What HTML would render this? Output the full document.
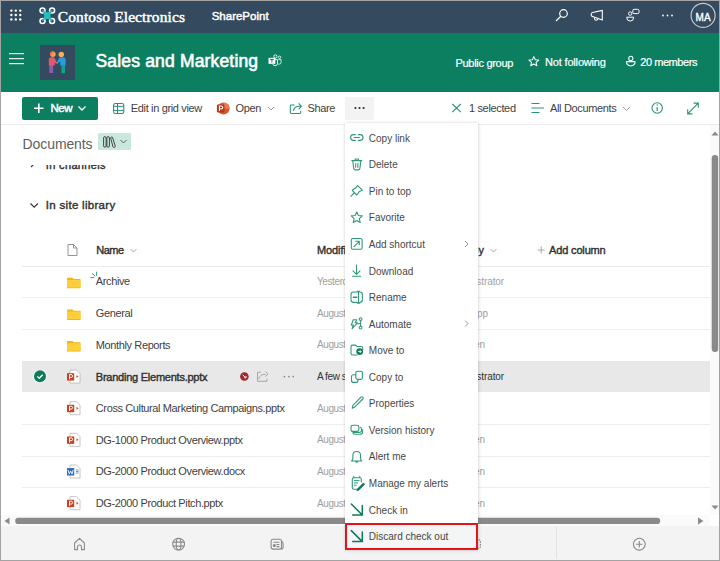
<!DOCTYPE html>
<html><head><meta charset="utf-8">
<style>
*{margin:0;padding:0;box-sizing:border-box}
html,body{width:720px;height:561px;overflow:hidden;background:#fff}
body{position:relative;font-family:"Liberation Sans",sans-serif;color:#323130}
.a{position:absolute}
.t{position:absolute;white-space:nowrap;line-height:1}
svg{position:absolute;overflow:visible}
#frame{position:absolute;left:0;top:0;width:720px;height:561px;border:1px solid #a3a3a3;z-index:50;pointer-events:none}
#suite{position:absolute;left:0;top:0;width:720px;height:33px;background:#344a5e}
#hdr{position:absolute;left:0;top:33px;width:720px;height:59px;background:#0c7f60}
#cmd{position:absolute;left:0;top:92px;width:720px;height:32px;background:#fff}
.sep{position:absolute;left:0;top:124px;width:719px;height:1px;background:#ececec}
.row{position:absolute;left:22px;width:688px;height:31.65px;border-bottom:1px solid #f0f0f0}
.cm{font-size:11px;letter-spacing:-0.35px;color:#424140}
.lt{font-size:11px;letter-spacing:-0.38px;color:#424140}
.gr{font-size:11px;letter-spacing:-0.3px;color:#a19f9d}
.wt{color:#fff}
#menu{position:absolute;left:345px;top:123px;width:133px;height:427px;background:#fff;box-shadow:0 0 2.5px rgba(0,0,0,0.16),1px 1px 4px rgba(0,0,0,0.07);z-index:20}
.mi{position:absolute;left:23.8px;font-size:10px;letter-spacing:0px;color:#484746;line-height:1;white-space:nowrap}
</style></head><body>

<!-- Suite bar -->
<div id="suite">
  <svg width="720" height="33" style="left:0;top:0">
    <g fill="#fff"><circle cx="11.35" cy="10.6" r="1.2"/><circle cx="15.8" cy="10.6" r="1.2"/><circle cx="20.25" cy="10.6" r="1.2"/><circle cx="11.35" cy="15.0" r="1.2"/><circle cx="15.8" cy="15.0" r="1.2"/><circle cx="20.25" cy="15.0" r="1.2"/><circle cx="11.35" cy="19.4" r="1.2"/><circle cx="15.8" cy="19.4" r="1.2"/><circle cx="20.25" cy="19.4" r="1.2"/></g>
    <!-- drone logo -->
    <g>
      <g fill="none" stroke="#fff" stroke-width="1.5">
      <circle cx="42.5" cy="10.4" r="2.5"/>
      <circle cx="52.1" cy="10.4" r="2.5"/>
      <circle cx="42.5" cy="20.9" r="2.5"/>
      <circle cx="52.1" cy="20.9" r="2.5"/>
      </g>
      <path d="M42.8 10.8 Q47.3 15.2 51.8 10.8 Q47.6 15.65 51.8 20.5 Q47.3 16.1 42.8 20.5 Q47 15.65 42.8 10.8 Z" fill="#25bdbd" stroke="#25bdbd" stroke-width="1.3" stroke-linejoin="round"/>
    </g>
    <!-- search -->
    <circle cx="563.5" cy="13.5" r="3.8" fill="none" stroke="#fff" stroke-width="1.2"/>
    <path d="M560.8 16.3 L556 21" stroke="#fff" stroke-width="1.3"/>
    <!-- megaphone -->
    <path d="M592.6 12.5 L602.3 10.4 V19.9 L592.6 16.6 Q591.1 16.2 591.1 14.55 Q591.1 12.9 592.6 12.5 Z M594.6 17.3 q-0.4 2.7 1.3 2.9 q1.7 0.1 2 -1.9" fill="none" stroke="#fff" stroke-width="1.1" stroke-linejoin="round"/>
    <!-- chat/settings -->
    <circle cx="630.2" cy="13.6" r="1.7" fill="none" stroke="#fff" stroke-width="1"/>
    <path d="M626.7 17.2 h7 q0 3.9 -3.5 3.9 q-3.5 0 -3.5 -3.9 z" fill="none" stroke="#fff" stroke-width="1" stroke-linejoin="round"/>
    <rect x="632.8" y="9.3" width="6.2" height="4.3" rx="1.3" fill="#344a5e" stroke="#fff" stroke-width="1"/>
    <!-- dots -->
    <circle cx="663" cy="15.5" r="0.9" fill="#fff"/><circle cx="667.5" cy="15.5" r="0.9" fill="#fff"/><circle cx="672" cy="15.5" r="0.9" fill="#fff"/>
    <!-- avatar -->
    <circle cx="703.1" cy="15.4" r="12" fill="none" stroke="#c3c9cf" stroke-width="1.2"/>
  </svg>
  <div class="t" style="left:57.8px;top:9px;font-family:'Liberation Serif',serif;font-size:15.4px;color:#fff;letter-spacing:0.15px;-webkit-text-stroke:0.5px #fff">Contoso Electronics</div>
  <div class="t wt" style="left:211.7px;top:11.1px;font-size:11.5px;letter-spacing:0px;-webkit-text-stroke:0.45px #fff">SharePoint</div>
  <div class="t wt" style="left:695.4px;top:12.5px;font-size:10px;letter-spacing:0.3px;-webkit-text-stroke:0.35px #fff">MA</div>
</div>

<!-- Site header -->
<div id="hdr">
  <svg width="720" height="59" style="left:0;top:0">
    <rect x="9" y="20" width="15" height="1.2" fill="#e6efe9"/>
    <rect x="9" y="25" width="15" height="1.2" fill="#e6efe9"/>
    <rect x="9" y="30" width="15" height="1.2" fill="#e6efe9"/>
    <rect x="40" y="12" width="35" height="35" fill="#344a5e"/>
    <!-- people -->
    <g transform="translate(0,-33)">
    <path d="M49.3 72.6 v-7.6 h3.8 v7.6 q0 0.4 -0.4 0.4 h-3 q-0.4 0 -0.4 -0.4 z" fill="#8e5cb5"/>
    <path d="M61.4 72.8 v-7.6 h3.6 v7.6 q0 0.4 -0.4 0.4 h-2.8 q-0.4 0 -0.4 -0.4 z" fill="#10a38f"/>
    <path d="M48.8 65.4 v-5.6 q0 -2.6 2.6 -2.6 h1.4 q1.7 0 2.4 1.7 l1.2 3 l1.6 1.1 l-0.5 0.9 l-2.7 -0.8 v2.3 z" fill="#e05a6e"/>
    <path d="M65.6 65.6 v-5.8 q0 -2.6 -2.6 -2.6 h-1.8 q-1.5 0 -2.3 1.4 l-1.9 3.4 l-0.3 1 l0.8 0.4 l2.7 -1.9 v4.1 z" fill="#2b9be0"/>
    <circle cx="52.9" cy="54.2" r="2.7" fill="#f5a25d"/>
    <path d="M50.2 54.6 q-0.3 -3.2 2.7 -3.1 q1.7 0 2.4 1.1 q-2.5 -0.1 -3.7 2.9 z" fill="#e8834a"/>
    <circle cx="61.3" cy="54.4" r="2.7" fill="#f7b05a"/>
    </g>
    <!-- teams -->
    <g transform="translate(0,-33)">
    <circle cx="275.4" cy="56.4" r="1.6" fill="none" stroke="#fff" stroke-width="0.9"/>
    <circle cx="279.6" cy="57.3" r="1.2" fill="none" stroke="#fff" stroke-width="0.8"/>
    <path d="M273.6 59.6 h3.9 v3.7 q0 2.4 -2.3 2.4 q-2 0 -2.4 -1.8" fill="none" stroke="#fff" stroke-width="0.9"/>
    <path d="M278.3 59.6 h2.8 v2.6 q0 2 -2 2 q-0.6 0 -1 -0.3" fill="none" stroke="#fff" stroke-width="0.8"/>
    <rect x="268.5" y="57.8" width="6.8" height="6" fill="#fff"/>
    <path d="M270 59.4 h3.8 M271.9 59.4 v3.2" stroke="#0c7f60" stroke-width="1"/>
    </g>
    <!-- star -->
    <path d="M533.8 23.6 l1.45 3.15 3.45 .35 -2.6 2.3 .75 3.4 -3.05 -1.75 -3.05 1.75 .75 -3.4 -2.6 -2.3 3.45 -.35 z" fill="none" stroke="#fff" stroke-width="1.05" stroke-linejoin="round"/>
    <!-- person -->
    <circle cx="630.8" cy="25.4" r="2.1" fill="none" stroke="#fff" stroke-width="1.05"/>
    <path d="M626.5 28.6 h8.6 q0 4.3 -4.3 4.3 q-4.3 0 -4.3 -4.3 z" fill="none" stroke="#fff" stroke-width="1.05" stroke-linejoin="round"/>
  </svg>
  <div class="t wt" style="left:95.5px;top:19.6px;font-size:17.5px;letter-spacing:0.17px;-webkit-text-stroke:0.6px #fff">Sales and Marketing</div>
  <div class="t wt" style="left:455.5px;top:24.6px;font-size:11px;letter-spacing:-0.3px;-webkit-text-stroke:0.2px #fff">Public group</div>
  <div class="t wt" style="left:545px;top:23.8px;font-size:11px;letter-spacing:-0.17px;-webkit-text-stroke:0.2px #fff">Not following</div>
  <div class="t wt" style="left:640.3px;top:23.8px;font-size:11px;letter-spacing:-0.45px;-webkit-text-stroke:0.2px #fff">20 members</div>
</div>

<!-- Command bar -->
<div id="cmd">
  <div class="a" style="left:22px;top:4.5px;width:76px;height:23.6px;background:#0c7f60;border-radius:2px"></div>
  <div class="a" style="left:345px;top:5px;width:29px;height:23px;background:#f3f3f3;border-radius:1px"></div>
  <svg width="720" height="32" style="left:0;top:0">
    <path d="M38.8 11.5 v9.5 M34 16.2 h9.5" stroke="#fff" stroke-width="1.6"/>
    <path d="M78.5 14.5 l3.5 3.5 3.5-3.5" fill="none" stroke="#fff" stroke-width="1.3"/>
    <!-- grid -->
    <rect x="113.6" y="11.5" width="10.2" height="10" rx="1.8" fill="none" stroke="#2b9176" stroke-width="1.1"/>
    <path d="M113.6 14.3 h10.2 M113.6 18.4 h10.2 M117.5 11.5 v10" stroke="#2b9176" stroke-width="1"/>
    <!-- ppt -->
    <circle cx="223.5" cy="16.5" r="6.1" fill="#d9572f"/>
    <path d="M223.5 10.4 a6.1 6.1 0 0 1 6.1 6.1 h-6.1 z" fill="#ec7a4f"/>
    <rect x="216.9" y="12.6" width="7.6" height="7.8" rx="1.2" fill="#b13a1c"/>
    <path d="M219.4 19 v-5 h1.7 q1.6 0 1.6 1.5 q0 1.5 -1.6 1.5 h-1.7" fill="none" stroke="#fff" stroke-width="1.05"/>
    <path d="M268 15 l3 3 3-3" fill="none" stroke="#a19f9d" stroke-width="1"/>
    <!-- share -->
    <path d="M294.6 12.9 h-3.4 q-0.9 0 -0.9 0.9 v6.8 q0 0.9 0.9 0.9 h8.6 q0.9 0 0.9 -0.9 v-1.8" fill="none" stroke="#2b9176" stroke-width="1.05" stroke-linejoin="round"/>
    <path d="M293.6 18.6 q0.5 -4.3 5.5 -4.3 h1.6 M298.9 11.7 l2.5 2.6 -2.5 2.6" fill="none" stroke="#2b9176" stroke-width="1.05" stroke-linejoin="round" stroke-linecap="round"/>
    <circle cx="355.4" cy="16" r="1.1" fill="#323130"/><circle cx="359.5" cy="16" r="1.1" fill="#323130"/><circle cx="363.6" cy="16" r="1.1" fill="#323130"/>
    <!-- X -->
    <path d="M452.3 12 L460.8 20.2 M460.8 12 L452.3 20.2" stroke="#2b9176" stroke-width="1.1"/>
    <!-- lines -->
    <path d="M531.5 11.5 h8 M531.5 16 h12.5 M531.5 20.5 h8" stroke="#2b9176" stroke-width="1.1"/>
    <path d="M623 15 l3.5 3.5 3.5-3.5" fill="none" stroke="#a19f9d" stroke-width="1"/>
    <!-- info -->
    <circle cx="657.2" cy="16" r="5.2" fill="none" stroke="#2b9176" stroke-width="1.1"/>
    <path d="M657.2 15 v4" stroke="#2b9176" stroke-width="1.2"/><circle cx="657.2" cy="13" r="0.7" fill="#2b9176"/>
    <!-- expand -->
    <path d="M688 21.6 L698 11.4 M693.6 11.1 h4.7 v4.7 M687.7 17.2 v4.7 h4.7" fill="none" stroke="#2b9176" stroke-width="1.1"/>
  </svg>
  <div class="t wt" style="left:50.5px;top:11px;font-size:11.5px;letter-spacing:-0.45px;-webkit-text-stroke:0.45px #fff">New</div>
  <div class="t cm" style="left:130.8px;top:10.7px">Edit in grid view</div>
  <div class="t cm" style="left:235.5px;top:10.7px">Open</div>
  <div class="t cm" style="left:307.5px;top:10.7px">Share</div>
  <div class="t cm" style="left:469px;top:10.7px">1 selected</div>
  <div class="t cm" style="left:550px;top:10.7px">All Documents</div>
</div>
<div class="sep"></div>

<!-- Content (scrolling) -->
<div class="a" style="left:1px;top:125px;width:709px;height:390px;overflow:hidden;background:#fff">
  <div style="position:absolute;left:-1px;top:-125px;width:720px;height:561px">
    <div class="t" style="left:45.8px;top:160.2px;font-size:11px;letter-spacing:0.35px;-webkit-text-stroke:0.4px #323130;color:#323130">In channels</div>
    <svg width="720" height="561" style="left:0;top:0">
      <path d="M31 161 l3 3 -3 3" fill="none" stroke="#323130" stroke-width="1.1"/>
      <path d="M30.5 203.5 l3.7 3.7 3.7-3.7" fill="none" stroke="#323130" stroke-width="1.1"/>
    </svg>
    <div class="t" style="left:45.8px;top:199.5px;font-size:11.5px;letter-spacing:0.3px;-webkit-text-stroke:0.4px #323130;color:#323130">In site library</div>
<!--ROWS-->
<div class="t" style="left:96.2px;top:245.29px;font-size:11px;letter-spacing:-0.45px;-webkit-text-stroke:0.4px #323130;color:#323130">Name</div>
<div class="t" style="left:317px;top:245.29px;font-size:11px;letter-spacing:-0.1px;-webkit-text-stroke:0.4px #323130;color:#323130">Modified</div>
<div class="t" style="right:236px;top:245.29px;font-size:11px;letter-spacing:-0.1px;-webkit-text-stroke:0.4px #323130;color:#323130">Modified By</div>
<div class="t" style="left:549px;top:245.29px;font-size:11px;letter-spacing:-0.15px;-webkit-text-stroke:0.4px #323130;color:#323130">Add column</div>
<div class="a" style="left:22px;top:265.75px;width:688px;height:1px;background:#ebebeb"></div>
<div class="a" style="left:22px;top:297.40px;width:688px;height:1px;background:#eeeeee"></div>
<div class="t lt" style="left:95.8px;top:276.29px">Archive</div>
<div class="t" style="left:317px;top:277.14px;font-size:10px;letter-spacing:-0.4px;color:#a19f9d">Yesterd</div>
<div class="t" style="right:216px;top:277.14px;font-size:10px;letter-spacing:-0.1px;color:#a19f9d">istrator</div>
<div class="a" style="left:22px;top:329.05px;width:688px;height:1px;background:#eeeeee"></div>
<div class="t lt" style="left:95.8px;top:307.94px">General</div>
<div class="t" style="left:317px;top:308.79px;font-size:10px;letter-spacing:-0.4px;color:#a19f9d">August</div>
<div class="t" style="right:232px;top:308.79px;font-size:10px;letter-spacing:-0.1px;color:#a19f9d">pp</div>
<div class="a" style="left:22px;top:360.70px;width:688px;height:1px;background:#eeeeee"></div>
<div class="t lt" style="left:95.8px;top:339.59px">Monthly Reports</div>
<div class="t" style="left:317px;top:340.44px;font-size:10px;letter-spacing:-0.4px;color:#a19f9d">August</div>
<div class="t" style="right:235px;top:340.44px;font-size:10px;letter-spacing:-0.1px;color:#a19f9d">en</div>
<div class="a" style="left:22px;top:360.80px;width:688px;height:31.3px;background:#e8e8e8"></div>
<div class="t" style="left:95.8px;top:371.84px;font-size:11px;letter-spacing:-0.24px;-webkit-text-stroke:0.4px #323130;color:#323130">Branding Elements.pptx</div>
<div class="t" style="left:317px;top:372.09px;font-size:10px;letter-spacing:-0.4px;color:#323130">A few s</div>
<div class="t" style="right:216px;top:372.09px;font-size:10px;letter-spacing:-0.1px;color:#323130">istrator</div>
<div class="a" style="left:22px;top:424.00px;width:688px;height:1px;background:#eeeeee"></div>
<div class="t lt" style="left:95.8px;top:402.89px">Cross Cultural Marketing Campaigns.pptx</div>
<div class="t" style="left:317px;top:403.74px;font-size:10px;letter-spacing:-0.4px;color:#a19f9d">August</div>
<div class="a" style="left:22px;top:455.65px;width:688px;height:1px;background:#eeeeee"></div>
<div class="t lt" style="left:95.8px;top:434.54px">DG-1000 Product Overview.pptx</div>
<div class="t" style="left:317px;top:435.39px;font-size:10px;letter-spacing:-0.4px;color:#a19f9d">August</div>
<div class="t" style="right:235px;top:435.39px;font-size:10px;letter-spacing:-0.1px;color:#a19f9d">en</div>
<div class="a" style="left:22px;top:487.30px;width:688px;height:1px;background:#eeeeee"></div>
<div class="t lt" style="left:95.8px;top:466.19px">DG-2000 Product Overview.docx</div>
<div class="t" style="left:317px;top:467.04px;font-size:10px;letter-spacing:-0.4px;color:#a19f9d">August</div>
<div class="t" style="right:235px;top:467.04px;font-size:10px;letter-spacing:-0.1px;color:#a19f9d">en</div>
<div class="a" style="left:22px;top:518.95px;width:688px;height:1px;background:#eeeeee"></div>
<div class="t lt" style="left:95.8px;top:497.84px">DG-2000 Product Pitch.pptx</div>
<div class="t" style="left:317px;top:498.69px;font-size:10px;letter-spacing:-0.4px;color:#a19f9d">August</div>
<div class="t" style="right:235px;top:498.69px;font-size:10px;letter-spacing:-0.1px;color:#a19f9d">en</div>
<svg width="720" height="561" style="left:0;top:0">
<path d="M68 244.5 h5.5 l3.5 3.5 v7.5 h-9 z M73.5 244.5 v3.5 h3.5" fill="none" stroke="#8a8886" stroke-width="0.9" stroke-linejoin="round"/>
<path d="M130.5 249 l3 3 3-3" fill="none" stroke="#a19f9d" stroke-width="0.9"/>
<path d="M490.5 249 l3 3 3-3" fill="none" stroke="#a19f9d" stroke-width="0.9"/>
<path d="M541.2 246.5 v7 M537.7 250 h7" stroke="#a19f9d" stroke-width="0.9"/>
<path d="M67 278.30 q0-0.5 0.5-0.5 h5 l1.2 1.2 h6.3 q0.5 0 0.5 0.5 v8.2 q0 0.6-0.6 0.6 h-12.3 q-0.6 0-0.6-0.6 z" fill="#f2b418"/>
<path d="M67 279.90 h13.5 v6.9 q0 0.6-0.6 0.6 h-12.3 q-0.6 0-0.6-0.6 z" fill="#ffcf3a"/>
<path d="M90.8 277.6 h3 M92.2 273.4 l2.6 2.6 M96.6 272.1 v3.3" stroke="#2a9a86" stroke-width="1" stroke-linecap="round"/>
<path d="M67 309.95 q0-0.5 0.5-0.5 h5 l1.2 1.2 h6.3 q0.5 0 0.5 0.5 v8.2 q0 0.6-0.6 0.6 h-12.3 q-0.6 0-0.6-0.6 z" fill="#f2b418"/>
<path d="M67 311.55 h13.5 v6.9 q0 0.6-0.6 0.6 h-12.3 q-0.6 0-0.6-0.6 z" fill="#ffcf3a"/>
<path d="M67 341.60 q0-0.5 0.5-0.5 h5 l1.2 1.2 h6.3 q0.5 0 0.5 0.5 v8.2 q0 0.6-0.6 0.6 h-12.3 q-0.6 0-0.6-0.6 z" fill="#f2b418"/>
<path d="M67 343.20 h13.5 v6.9 q0 0.6-0.6 0.6 h-12.3 q-0.6 0-0.6-0.6 z" fill="#ffcf3a"/>
<path d="M70 370.05 h6.5 l3.5 3.5 v9.5 h-10 z" fill="#fff" stroke="#b7b7b7" stroke-width="0.8"/>
<rect x="67" y="373.15" width="7.2" height="7.4" fill="#c94124"/>
<path d="M69.5 379.35 v-4.8 h1.6 q1.5 0 1.5 1.45 q0 1.45-1.5 1.45 h-1.6" fill="none" stroke="#fff" stroke-width="1"/>
<path d="M76.5 375.05 l2 1.5 -2 1.5z" fill="#d04423"/>
<circle cx="40" cy="376.35" r="6.7" fill="#fff"/><circle cx="40" cy="376.35" r="6" fill="#0f7b5b"/>
<path d="M37.3 376.35 l1.9 1.9 3.5-3.5" fill="none" stroke="#fff" stroke-width="1.3"/>
<circle cx="244.4" cy="376.55" r="4.3" fill="#a4262c"/>
<path d="M242.6 374.75 l3 3 M246 375.95 v1.8 h-1.8" fill="none" stroke="#fff" stroke-width="1"/>
<path d="M261 372.25 h-3.5 v9 h9.5 v-2.5" fill="none" stroke="#a19f9d" stroke-width="0.9" stroke-linejoin="round"/>
<path d="M258.8 378.95 q0.8-4.8 6.6-4.6 M265.3 371.55 l2.6 2.4 -2.6 2.6" fill="none" stroke="#a19f9d" stroke-width="0.9" stroke-linejoin="round"/>
<circle cx="284.4" cy="376.55" r="0.85" fill="#8a8886"/>
<circle cx="288.9" cy="376.55" r="0.85" fill="#8a8886"/>
<circle cx="293.3" cy="376.55" r="0.85" fill="#8a8886"/>
<path d="M70 401.70 h6.5 l3.5 3.5 v9.5 h-10 z" fill="#fff" stroke="#b7b7b7" stroke-width="0.8"/>
<rect x="67" y="404.80" width="7.2" height="7.4" fill="#c94124"/>
<path d="M69.5 411.00 v-4.8 h1.6 q1.5 0 1.5 1.45 q0 1.45-1.5 1.45 h-1.6" fill="none" stroke="#fff" stroke-width="1"/>
<path d="M76.5 406.70 l2 1.5 -2 1.5z" fill="#d04423"/>
<path d="M70 433.35 h6.5 l3.5 3.5 v9.5 h-10 z" fill="#fff" stroke="#b7b7b7" stroke-width="0.8"/>
<rect x="67" y="436.45" width="7.2" height="7.4" fill="#c94124"/>
<path d="M69.5 442.65 v-4.8 h1.6 q1.5 0 1.5 1.45 q0 1.45-1.5 1.45 h-1.6" fill="none" stroke="#fff" stroke-width="1"/>
<path d="M76.5 438.35 l2 1.5 -2 1.5z" fill="#d04423"/>
<path d="M70 465.00 h6.5 l3.5 3.5 v9.5 h-10 z" fill="#fff" stroke="#b7b7b7" stroke-width="0.8"/>
<rect x="67" y="468.10" width="7.2" height="7.4" fill="#2b65c0"/>
<path d="M68 469.90 l1.2 4.2 1.4-3.2 1.4 3.2 1.2-4.2" fill="none" stroke="#fff" stroke-width="0.9"/>
<path d="M76 470.00 h2.5 M76 471.50 h2.5 M76 473.00 h2.5" stroke="#2b65c0" stroke-width="0.7"/>
<path d="M70 496.65 h6.5 l3.5 3.5 v9.5 h-10 z" fill="#fff" stroke="#b7b7b7" stroke-width="0.8"/>
<rect x="67" y="499.75" width="7.2" height="7.4" fill="#c94124"/>
<path d="M69.5 505.95 v-4.8 h1.6 q1.5 0 1.5 1.45 q0 1.45-1.5 1.45 h-1.6" fill="none" stroke="#fff" stroke-width="1"/>
<path d="M76.5 501.65 l2 1.5 -2 1.5z" fill="#d04423"/>
</svg>
<!--/ROWS-->
  </div>
</div>

<!-- Documents header (sticky) -->
<div class="a" style="left:1px;top:125px;width:709px;height:39.9px;background:#fff">
  <div class="t" style="left:21.6px;top:11.9px;font-size:14px;color:#605e5c;letter-spacing:-0.1px">Documents</div>
  <div class="a" style="left:97px;top:8px;width:33px;height:17px;background:#c8e8de;border-radius:1px"></div>
  <svg width="709" height="38" style="left:0;top:0">
    <g fill="none" stroke="#3b3a39" stroke-width="0.95">
    <rect x="102.6" y="11.6" width="2.5" height="10.6" rx="1.25"/>
    <rect x="105.9" y="11.6" width="2.5" height="10.6" rx="1.25"/>
    <path d="M109.6 12.6 q0.9 -0.9 1.9 -0.3 l2.7 8.6 q0.3 1.2 -0.9 1.5 q-1 0.2 -1.4 -0.8 z"/>
    </g>
    <path d="M119.5 15 l3 3 3-3" fill="none" stroke="#605e5c" stroke-width="1"/>
  </svg>
</div>

<!-- vertical scrollbar -->
<div class="a" style="left:710px;top:125px;width:9px;height:390px;background:#fafafa"></div>
<svg width="720" height="561" style="left:0;top:0">
  <path d="M711.5 135.5 l3.5-4 3.5 4 z" fill="#8a8a8a"/>
  <rect x="711.7" y="155" width="6.5" height="197" rx="3.2" fill="#8a8a8a"/>
  <path d="M711.5 505.5 l3.5 4 3.5-4 z" fill="#8a8a8a"/>
</svg>

<!-- horizontal scrollbar -->
<div class="a" style="left:1px;top:515px;width:709px;height:11px;background:#fafafa"></div>
<svg width="720" height="561" style="left:0;top:0">
  <path d="M9.5 517.5 l-5 3.5 5 3.5 z" fill="#8a8a8a"/>
  <rect x="15.2" y="517.8" width="645" height="6.2" rx="3.1" fill="#8a8a8a"/>
  <path d="M698 517.5 l5.5 3.5 -5.5 3.5 z" fill="#8a8a8a"/>
</svg>

<!-- bottom app bar -->
<div class="a" style="left:1px;top:526px;width:718px;height:34px;background:#f3f3f3"></div>
<div class="a" style="left:556px;top:527px;width:1px;height:32px;background:#e2e2e2"></div>

<svg width="720" height="561" style="left:0;top:0">
<g fill="none" stroke="#8a8a8a" stroke-width="1.1" stroke-linejoin="round">
<path d="M74.6 549.6 v-6.6 l4.9 -4.7 l4.9 4.7 v6.6 h-2.9 v-2.6 q0 -2 -2 -2 q-2 0 -2 2 v2.6 z"/>
<circle cx="178.6" cy="544.1" r="5.9"/>
<ellipse cx="178.6" cy="544.1" rx="2.4" ry="5.9"/>
<path d="M172.9 542.1 h11.4 M172.9 546.1 h11.4"/>
<rect x="271.1" y="539.3" width="10.4" height="9.8" rx="2"/>
<path d="M281.5 541.5 q1.6 0.3 1.6 2 v3.5 q0 2.1 -2.1 2.1"/>
<path d="M273.4 542.3 h6 M276.4 544.5 h3 M276.4 546.6 h3"/>
<circle cx="274.3" cy="545.5" r="1" fill="#8a8a8a"/>
<path d="M478.6 539.6 q1.8 0.3 1.8 2.2 v4.6 q0 2.1 -2.1 2.1" stroke-dasharray="1.6 0.9"/>
<circle cx="639.3" cy="544.2" r="5.9"/>
<path d="M639.3 541 v6.4 M636.1 544.2 h6.4"/>
</g></svg>
<!-- Context menu -->
<div id="menu">
<div class="a" style="left:0;top:400.5px;width:133px;height:26.5px;background:#f4f5f5"></div>
<div class="mi" style="top:10.84px">Copy link</div>
<div class="mi" style="top:37.39px">Delete</div>
<div class="mi" style="top:63.94px">Pin to top</div>
<div class="mi" style="top:90.49px">Favorite</div>
<div class="mi" style="top:117.04px">Add shortcut</div>
<div class="mi" style="top:143.59px">Download</div>
<div class="mi" style="top:170.14px">Rename</div>
<div class="mi" style="top:196.69px">Automate</div>
<div class="mi" style="top:223.24px">Move to</div>
<div class="mi" style="top:249.79px">Copy to</div>
<div class="mi" style="top:276.34px">Properties</div>
<div class="mi" style="top:302.89px">Version history</div>
<div class="mi" style="top:329.44px">Alert me</div>
<div class="mi" style="top:355.99px">Manage my alerts</div>
<div class="mi" style="top:382.54px">Check in</div>
<div class="mi" style="top:409.09px">Discard check out</div>
<svg id="micons" width="133" height="427" style="left:0;top:0"><g transform="translate(-345,-123)" fill="none" stroke="#8a8886" stroke-width="0.9">
<path d="M465 241 l3 3 -3 3"/><path d="M465 320.6 l3 3 -3 3"/>
</g><g transform="translate(-345,-123)" fill="none" stroke="#30987a" stroke-width="1.1" stroke-linecap="round" stroke-linejoin="round">
<!-- link -->
<path d="M355.3 134.6 h-1.8 a2.9 2.9 0 0 0 0 5.8 h1.8 M358.3 134.6 h1.8 a2.9 2.9 0 0 1 0 5.8 h-1.8 M354.2 137.5 h5.2"/>
<!-- trash -->
<path d="M351.8 160.6 h10 M355.2 160.3 v-1.3 h3.2 v1.3 M352.8 161 l0.9 7.4 q0.2 1.5 1.7 1.5 h2.8 q1.5 0 1.7 -1.5 l0.9 -7.4 M355.7 163.5 v3.8 M357.9 163.5 v3.8"/>
<!-- pin -->
<path d="M357.6 185.6 L362.3 190.2 L359.3 191.6 L356.8 195 L352.2 190.3 L355.8 187.8 Z M354.2 192.8 L350.9 196.3"/>
<!-- star -->
<path d="M356.75 211.9 l1.65 3.6 3.9 .4 -2.95 2.65 .85 3.85 -3.45 -2 -3.45 2 .85 -3.85 -2.95 -2.65 3.9 -.4 z"/>
<!-- add shortcut -->
<rect x="351.3" y="238.5" width="10.8" height="10.8" rx="1.6"/>
<path d="M354 246.6 L359.3 241.3 M355.8 241.3 h3.5 v3.5"/>
<!-- download -->
<path d="M356.5 265 v9.2 M353 270.8 l3.5 3.5 3.5 -3.5 M352.5 276.2 h8.2"/>
<!-- rename -->
<path d="M357.2 292 h-3.6 q-2.6 0 -2.6 2.6 v5.2 q0 2.6 2.6 2.6 h3.6 M359.8 292 q2.6 0 2.6 2.6 v5.2 q0 2.6 -2.6 2.6 M358.5 291.2 v11.9 M357.3 291.2 h2.4 M357.3 303.1 h2.4"/>
<path d="M353.4 297.2 h3.4" stroke-width="1.6"/>
<!-- automate -->
<path d="M353.2 319.8 h3.6 l-1.6 3 h2.2 l-5.3 5.8 l1.2 -3.5 h-2 z M357.5 323.8 h3 M360.6 320.4 v6"/>
<circle cx="360.6" cy="319.1" r="1.4"/><circle cx="360.6" cy="327.6" r="1.4"/>
<!-- move to -->
<path d="M357 355 h-4.2 q-1.8 0 -1.8 -1.8 v-6.6 q0 -1.5 1.5 -1.5 h3 l1.4 1.4 h4.3 q1.6 0 1.6 1.6 v1.5"/>
<!-- copy to -->
<rect x="355.8" y="371.3" width="6.6" height="8.1" rx="1.6"/>
<path d="M355.5 374.8 h-2 q-2 0 -2 2 v3.6 q0 2 2 2 h2.6 q1.9 0 2 -2"/>
<!-- properties -->
<path d="M352.3 408.2 l0.6 -2.9 l8.1 -8.1 q0.9 -0.9 1.8 0 q0.9 0.9 0 1.8 l-8.1 8.1 z"/>
<!-- version history -->
<rect x="351" y="425.3" width="7.8" height="6.1" rx="1.7"/>
<path d="M360.2 427.3 q1.4 0.5 1.4 2.1 v0.6 q0 2.5 -2.5 2.5 h-5 q-1.5 0 -2 -1.2 M361.9 429.4 q0.8 0.6 0.8 1.8 v0.3 q0 2.8 -2.8 2.8 h-4.6 q-1.6 0 -2.2 -1.1" />
<!-- bell -->
<path d="M351.6 461 q1.3 -1.1 1.3 -3 v-2.8 q0 -3.7 3.8 -3.7 q3.8 0 3.8 3.7 v2.8 q0 1.9 1.3 3 z M355.6 461.5 q1.1 1.3 2.2 0"/>
<!-- manage alerts -->
<path d="M358.6 489.3 h-4.8 q-1.5 0 -1.5 -1.5 v-8.6 q0 -1.5 1.5 -1.5 h6 q1.5 0 1.5 1.5 v2.8 M353.8 477.3 v-0.9 M359.8 477.3 v-0.9"/>
<path d="M354.3 480.6 h4.8 M354.3 482.9 h3.2 M354.3 485.2 h2" stroke-width="1"/>
</g>
<g transform="translate(-345,-123)">
<circle cx="359.7" cy="351.6" r="3.4" fill="#0f7a5a"/>
<path d="M358.1 351.6 h3 M359.8 350.2 l1.4 1.4 -1.4 1.4" fill="none" stroke="#fff" stroke-width="0.9"/>
<path d="M357.2 488.8 l5.5 -5.5 q0.9 -0.9 1.7 0 q0.8 0.9 0 1.7 l-5.5 5.5 l-2.4 0.7 z" fill="#0f7a5a"/>
<path d="M351.3 504 L361.8 514.5 M362.3 505.4 v9.6 h-9.6" fill="none" stroke="#0f7a5a" stroke-width="1.5" stroke-linecap="round"/>
<path d="M351.3 530.6 L361.8 541.1 M362.3 532 v9.6 h-9.6" fill="none" stroke="#0f7a5a" stroke-width="1.5" stroke-linecap="round"/>
</g></svg>
</div>
<div class="a" style="left:344.5px;top:523px;width:133.5px;height:26.5px;border:2px solid #e6121c;z-index:30"></div>

<div id="frame"></div>
</body></html>
